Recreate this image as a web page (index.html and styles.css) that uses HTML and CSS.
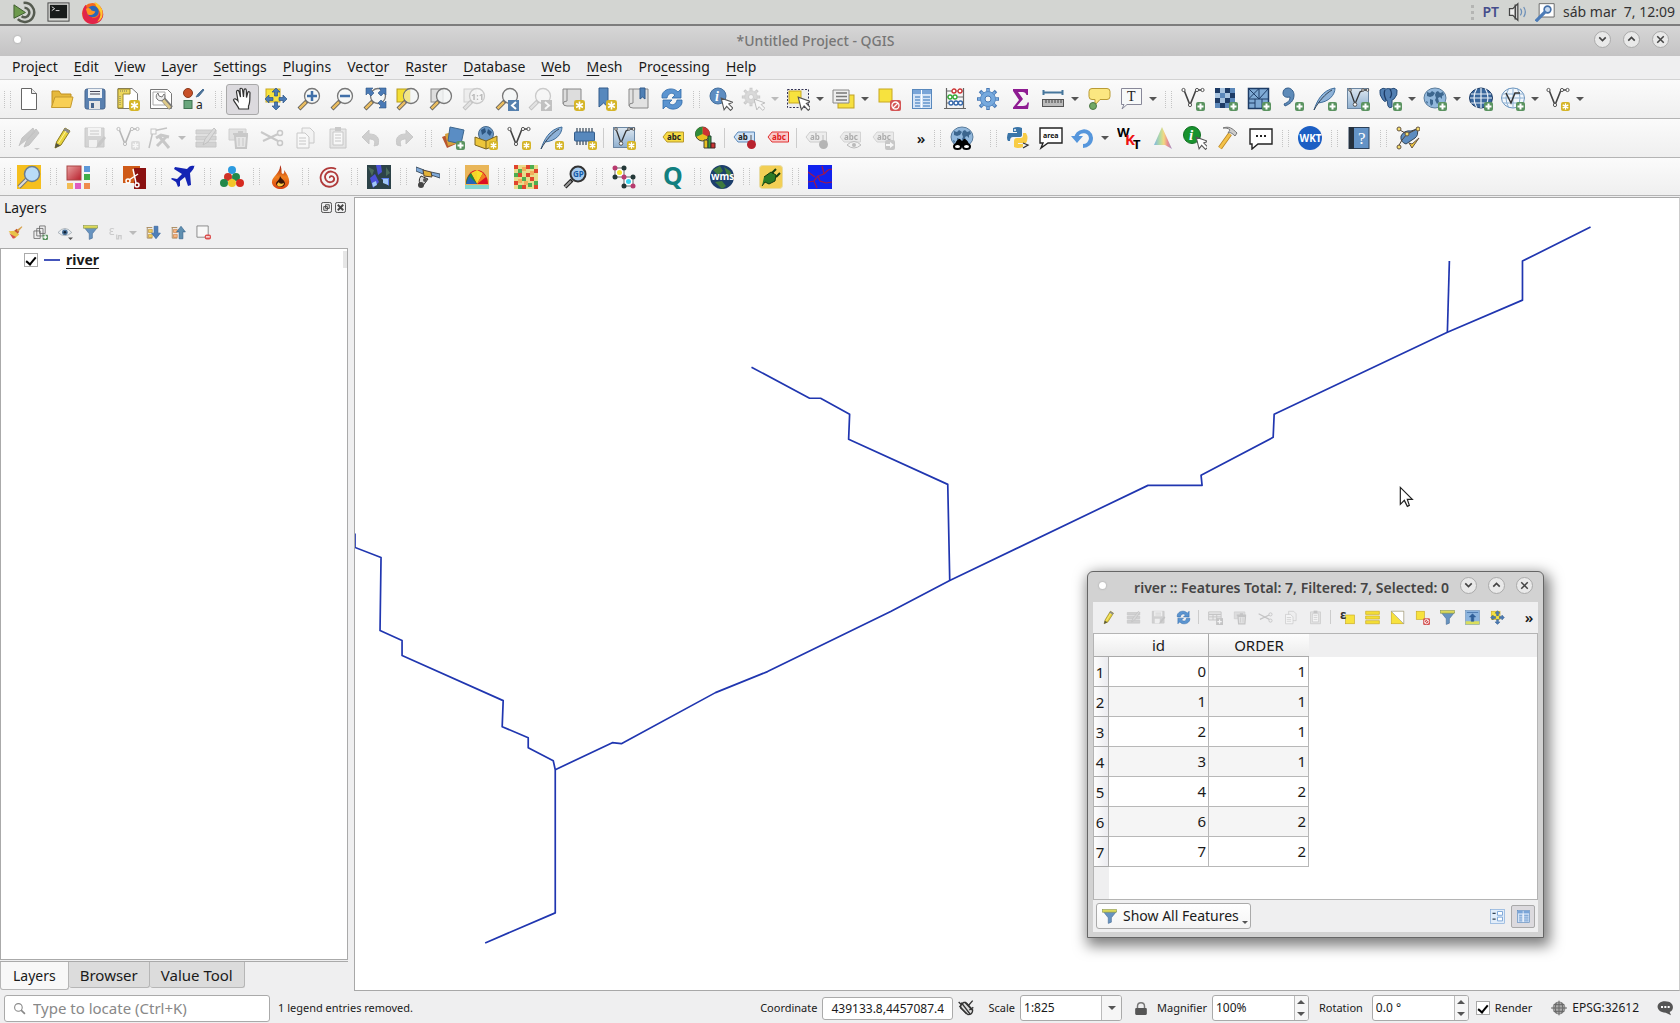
FILE: index.html
```html
<!DOCTYPE html>
<html lang="en">
<head>
<meta charset="utf-8">
<title>Untitled Project - QGIS</title>
<link rel="stylesheet" href="styles.css">
</head>
<body>
<svg class="sprite" aria-hidden="true">
<defs>
<linearGradient id="g-steel" x1="0" y1="0" x2="0" y2="1"><stop offset="0" stop-color="#dde7f0"/><stop offset="1" stop-color="#8fb0d0"/></linearGradient>
<linearGradient id="g-red" x1="0" y1="0" x2="1" y2="1"><stop offset="0" stop-color="#e9a0a0"/><stop offset="1" stop-color="#b8202c"/></linearGradient>
<linearGradient id="g-fire" x1="0" y1="0" x2="0" y2="1"><stop offset="0" stop-color="#a01810"/><stop offset=".5" stop-color="#f08020"/><stop offset="1" stop-color="#d84010"/></linearGradient>
<linearGradient id="g-rain" x1="0" y1="0" x2="1" y2="0"><stop offset="0" stop-color="#7fb8e0"/><stop offset=".35" stop-color="#b8dca0"/><stop offset=".55" stop-color="#f4d880"/><stop offset=".75" stop-color="#e89090"/><stop offset="1" stop-color="#a090c8"/></linearGradient>
<symbol id="plus" viewBox="0 0 9 9"><rect width="9" height="9" rx="2" fill="#5a9360"/><path d="M4.5 1.5v6M1.500 4.500h6" stroke="#fff" stroke-width="2"/></symbol>
<symbol id="star" viewBox="0 0 9 9"><rect width="9" height="9" rx="2" fill="#d5b528"/><path d="M4.500 1.300v6.400M1.700 2.900l5.600 3.200M1.700 6.100l5.600-3.200" stroke="#fff" stroke-width="1.300"/></symbol>
<symbol id="lens" viewBox="0 0 24 24"><path d="M10 14l-8 8" stroke="#555" stroke-width="4"/><path d="M9 15l-6.500 6.500" stroke="#e9bd62" stroke-width="2.500"/><circle cx="15" cy="9" r="7.500" fill="#f4f6f6" fill-opacity=".8" stroke="#777" stroke-width="1.300"/></symbol>
<symbol id="vee" viewBox="0 0 24 24"><path d="M3 3l6 15L15 3h7" fill="none" stroke="#444" stroke-width="1.600"/><g fill="#fff" stroke="#555"><circle cx="2.500" cy="3" r="1.600"/><circle cx="9" cy="18" r="1.600"/><circle cx="16" cy="3" r="1.600"/><circle cx="21.500" cy="3" r="1.600"/></g></symbol>
<symbol id="arrow" viewBox="0 0 12 12"><path d="M1 1l2.500 10 2.200-3 3.300 3.500 2-2L7.500 6 11 4.500z" fill="#fff" stroke="#555" stroke-width=".9"/></symbol>
<symbol id="pencil" viewBox="0 0 24 24"><path d="M5 22l1.500-6L15 2l5 3-9 14z" fill="#e8d33c" stroke="#8a7a20"/><path d="M5 22l1-5 4.500 2.500z" fill="#554"/><path d="M15 2l5 3-1.500 2.500-5-3z" fill="#8a8a8a"/><path d="M8.500 17L16 5" stroke="#fff6a0"/></symbol>
<symbol id="move" viewBox="0 0 24 24"><path d="M12 1l4 4h-2.500v4h-3V5H8zM12 23l4-4h-2.500v-4h-3v4H8zM1 12l4-4v2.500h4v3H5V16zM23 12l-4-4v2.500h-4v3h4V16z" fill="#4a7ab5" stroke="#2c5484" stroke-width=".7"/></symbol>
<symbol id="new" viewBox="0 0 24 24"><path d="M4.500 1.500h10l5 5v16h-15z" fill="#fff" stroke="#666"/><path d="M14.500 1.500v5h5" fill="#eee" stroke="#666"/></symbol>
<symbol id="open" viewBox="0 0 24 24"><path d="M2 20V4h7l2 3h10v4" fill="#e6b93c" stroke="#c09020"/><path d="M1.500 20.500L5 10h18l-2.500 10.500z" fill="#f8cf55" stroke="#c59a2e"/></symbol>
<symbol id="save" viewBox="0 0 24 24"><rect x="2" y="2" width="20" height="20" rx="2" fill="#5980b0" stroke="#46648c"/><rect x="5" y="2" width="14" height="9" fill="#eef2f6"/><path d="M7 4.500h10M7 7h10" stroke="#445"/><rect x="6" y="14" width="11" height="8" fill="#e6e6e6"/><rect x="8" y="16" width="3" height="5" fill="#46648c"/></symbol>
<symbol id="layout" viewBox="0 0 24 24"><path d="M2 1.500h14l5.500 5v15H2z" fill="#fff" stroke="#777"/><path d="M2 2h12v5H7v14H2z" fill="#ecd75d" stroke="#9c882a"/><path d="M4 4h8M4 9v9" stroke="#776" stroke-dasharray="1 1"/><use href="#star" x="13" y="13" width="11" height="11"/></symbol>
<symbol id="manager" viewBox="0 0 24 24"><path d="M1.500 2.500h17l4 4v15h-21z" fill="#fff" stroke="#777"/><path d="M4 5h12v13H4z" fill="none" stroke="#aaa"/><path d="M13 11l9 10" stroke="#777" stroke-width="5"/><path d="M14 13l7 8" stroke="#ddc98a" stroke-width="3"/><path d="M9 6a4 4 0 0 0 5 7 4 4 0 0 0 1-6l-2 3-3-1z" fill="#eee" stroke="#777"/></symbol>
<symbol id="style" viewBox="0 0 24 24"><circle cx="6" cy="6" r="4.500" fill="#c85028" stroke="#8a3a1c"/><path d="M14 10l2-3 5-5 1 1-5 6z" fill="#4c7298" stroke="#4c7298"/><rect x="2" y="13.500" width="8" height="8" fill="#69a67c" stroke="#3f7350"/><text x="14" y="22" font-size="12" fill="#222">a</text></symbol>
<symbol id="hand" viewBox="0 0 24 24"><path d="M8 22c-1-3-4-6-5.500-9 .5-2 2.500-1.500 4.500 1L5.500 5c0-2 2-2 2.500-.5L9.500 10 9 2.500C9 .8 11.300.8 11.500 2.500L12.500 10l.5-7c.3-1.600 2.200-1.400 2.300.2L15.500 10.500l1.300-5c.6-1.400 2.400-.8 2.200.7C18.600 10 19.500 15 17.500 19v3z" fill="#fff" stroke="#333" stroke-width="1.200"/></symbol>
<symbol id="pansel" viewBox="0 0 24 24"><rect x="2" y="2" width="14" height="13" fill="#f7e23e" stroke="#c8a820"/><use href="#move"/></symbol>
<symbol id="zin" viewBox="0 0 24 24"><use href="#lens"/><path d="M15 4v10M10 9h10" stroke="#3f6fa8" stroke-width="2.500"/></symbol>
<symbol id="zout" viewBox="0 0 24 24"><use href="#lens"/><path d="M10 9h10" stroke="#3f6fa8" stroke-width="2.500"/></symbol>
<symbol id="zfull" viewBox="0 0 24 24"><use href="#lens"/><path d="M3 1h7L8 3l3 3-3 3-3-3-2 2zM23 1v7l-2-2-3 3-3-3 3-3-2-2zM23 21h-7l2-2-3-3 3-3 3 3 2-2z" fill="#4a7ab5" stroke="#2c5484" stroke-width=".6"/></symbol>
<symbol id="zsel" viewBox="0 0 24 24"><rect x="1" y="2" width="13" height="13" fill="#f3df35" stroke="#b89c1c"/><use href="#lens"/><path d="M14 3a6 6 0 0 0 0 12z" fill="#f1e688"/></symbol>
<symbol id="zlay" viewBox="0 0 24 24"><rect x="2" y="2" width="12" height="13" fill="#ddd" stroke="#888"/><use href="#lens"/></symbol>
<symbol id="znat" viewBox="0 0 24 24"><use href="#zlay"/><text x="9" y="13" font-size="9" font-weight="700" fill="#444">1:1</text></symbol>
<symbol id="zlast" viewBox="0 0 24 24"><use href="#lens"/><rect x="13" y="13" width="11" height="11" fill="#5580ae"/><path d="M21 15l-4 3.500 4 3.500" fill="none" stroke="#fff" stroke-width="2"/></symbol>
<symbol id="znext" viewBox="0 0 24 24"><use href="#lens"/><rect x="13" y="13" width="11" height="11" fill="#666"/><path d="M17 15l4 3.500-4 3.500" fill="none" stroke="#fff" stroke-width="2"/></symbol>
<symbol id="newmap" viewBox="0 0 24 24"><path d="M2 2h18v17H6q-4 0-4-3z" fill="#ddd" stroke="#888"/><path d="M6 2v12q-4 0-4 3" fill="none" stroke="#888"/><use href="#star" x="13" y="13" width="11" height="11"/></symbol>
<symbol id="newbm" viewBox="0 0 24 24"><path d="M5 1h9v19l-4.500-4L5 20z" fill="#5788bd" stroke="#345d8c"/><use href="#star" x="12" y="13" width="11" height="11"/></symbol>
<symbol id="bm" viewBox="0 0 24 24"><path d="M2 2h19v19H6q-4 0-4-3z" fill="#e2e2e2" stroke="#888"/><path d="M6 2v14q-4 0-4 3" fill="none" stroke="#888"/><path d="M13 1h5v11l-2.500-2-2.500 2z" fill="#4f80b5" stroke="#345d8c"/></symbol>
<symbol id="refresh" viewBox="0 0 24 24"><path d="M2 11V8c2-7 12-8 16-3l3-3v9h-9l3-3c-3-3-7-2-8 3zM22 13v3c-2 7-12 8-16 3l-3 3v-9h9l-3 3c3 3 7 2 8-3z" fill="#5b94d0" stroke="#2f69a8" stroke-width=".8"/></symbol>
<symbol id="ident" viewBox="0 0 24 24"><circle cx="9" cy="9" r="8" fill="#5d8cc0" stroke="#44709f"/><text x="6" y="14" font-size="14" font-weight="700" font-style="italic" fill="#fff" font-family="Liberation Serif">i</text><use href="#arrow" x="11" y="10" width="14" height="14"/></symbol>
<symbol id="gear" viewBox="0 0 24 24"><path d="M12 1v22M1 12h22M4 4l16 16M20 4L4 20" stroke="#4a7ab5" stroke-width="3.500"/><path d="M12 2v20M2 12h20M5 5l14 14M19 5L5 19" stroke="#76a9de" stroke-width="2"/><circle cx="12" cy="12" r="7.500" fill="#76a9de" stroke="#5a8cc4"/><circle cx="12" cy="12" r="3" fill="#f5f5f5" stroke="#4a7ab5"/></symbol>
<symbol id="action" viewBox="0 0 24 24"><use href="#gear" width="20" height="20"/><use href="#arrow" x="12" y="11" width="13" height="13"/></symbol>
<symbol id="select" viewBox="0 0 24 24"><rect x="1.500" y="2.500" width="21" height="18" fill="#eee" stroke="#335" stroke-dasharray="2 1.500"/><rect x="3" y="4" width="12" height="12" fill="#f7e23e" stroke="#c8a820"/><use href="#arrow" x="11" y="9" width="15" height="15"/></symbol>
<symbol id="selval" viewBox="0 0 24 24"><rect x="7" y="8" width="16" height="13" fill="#f6e040" stroke="#bfa126"/><path d="M2 3h16v13H2z" fill="#eee" stroke="#888"/><path d="M5 6h11M5 9.500h11M5 13h11" stroke="#777" stroke-width="1.500"/></symbol>
<symbol id="desel" viewBox="0 0 24 24"><rect x="2" y="2" width="13" height="13" fill="#f7e23e" stroke="#c8a820"/><rect x="13" y="13" width="11" height="11" rx="2" fill="#d45555"/><circle cx="18.500" cy="18.500" r="3.500" fill="none" stroke="#fff" stroke-width="1.300"/><path d="M16 21l5-5" stroke="#fff" stroke-width="1.300"/></symbol>
<symbol id="table" viewBox="0 0 24 24"><rect x="2.500" y="2.500" width="19" height="19" fill="#d5e4f7" stroke="#5888bd"/><path d="M3 3h18v4H3z" fill="#7aa5d8"/><path d="M5 10h5M5 13h5M5 16h5M5 19h5M13 10h7M13 13h7M13 16h7M13 19h7" stroke="#6695cc" stroke-width="1.500"/><path d="M11.500 3v18" stroke="#fff"/></symbol>
<symbol id="abacus" viewBox="0 0 24 24"><path d="M3.500 1v20M20.500 1v20M1 21.500h22M3 4h18M3 10h18M3 16h18" stroke="#666" fill="none" stroke-width="1.200"/><g fill="#fff" stroke-width="1.300"><g stroke="#c33"><circle cx="11" cy="4" r="2"/><circle cx="17" cy="4" r="2"/></g><g stroke="#3a3"><circle cx="7" cy="10" r="2"/><circle cx="12" cy="10" r="2"/></g><g stroke="#36a"><circle cx="8" cy="16" r="2"/><circle cx="13" cy="16" r="2"/><circle cx="17.500" cy="16" r="2"/></g></g></symbol>
<symbol id="sum" viewBox="0 0 24 24"><path d="M4 2h15v6h-1.500q-1-3-4-3H9l5 7-6 7h6q4 0 4.500-3.500H20L19 22H4v-1.500L10 13 4 4z" fill="#8e1c92"/></symbol>
<symbol id="measure" viewBox="0 0 24 24"><path d="M2 5.500h20M2.500 3v5M21.500 3v5" stroke="#46769c" stroke-width="2"/><rect x="1.500" y="12.500" width="21" height="7" fill="#bbb" stroke="#555"/><path d="M5 13v3M8 13v3M11 13v3M14 13v3M17 13v3M20 13v3" stroke="#444"/></symbol>
<symbol id="tip" viewBox="0 0 24 24"><path d="M5 1.500h15q3 0 3 3v5q0 3-3 3h-7L8 18V12.500H5q-3 0-3-3v-5q0-3 3-3z" fill="#fbe781" stroke="#b99b35"/><circle cx="6" cy="19" r="3.500" fill="#71a865" stroke="#4c7745"/></symbol>
<symbol id="anno" viewBox="0 0 24 24"><path d="M2.500 1.500h20v16H8L3 22l2-4.500H2.500z" fill="#f7f9f9" stroke="#889"/><text x="8" y="14" font-size="14" font-family="Liberation Serif" fill="#222">T</text></symbol>
<symbol id="addv" viewBox="0 0 24 24"><use href="#vee"/><use href="#plus" x="15" y="15" width="9" height="9"/></symbol>
<symbol id="newv" viewBox="0 0 24 24"><use href="#vee"/><use href="#star" x="15" y="15" width="9" height="9"/></symbol>
<symbol id="addr" viewBox="0 0 24 24"><rect x="1" y="1" width="20" height="20" fill="#5c88ba"/><path d="M6 1h5v5H6zM11 6h5v5h-5zM1 6h5v5H1zM6 11h5v5H6z" fill="#a8c4e0"/><path d="M1 1h5v5H1zM11 1h5v5h-5zM16 6h5v5h-5zM1 11h5v5H1zM11 11h5v5h-5zM6 16h5v5H6z" fill="#1e3c66"/><use href="#plus" x="15" y="15" width="9" height="9"/></symbol>
<symbol id="addmesh" viewBox="0 0 24 24"><rect x="1.500" y="1.500" width="20" height="20" fill="#7ea9d4" stroke="#1e3c66" stroke-width="1.500"/><path d="M1.500 12h20M12 1.500v10M8 12v10M1.500 1.500L12 12M12 1.500L1.500 12M21.500 1.500L12 12M1.500 16h6.500M15 12v10" fill="none" stroke="#1e3c66"/><use href="#plus" x="15" y="15" width="9" height="9"/></symbol>
<symbol id="comma" viewBox="0 0 24 24"><path d="M4 17c5-2 6-4 6-7-5 1-7-1-7-4 0-3 2-5 5-5s6 3 6 7c0 6-4 9-9 11z" fill="#5d8ab8" stroke="#365f8c"/><use href="#plus" x="15" y="15" width="9" height="9"/></symbol>
<symbol id="quill" viewBox="0 0 24 24"><path d="M1 23C4 14 9 3 22 1c0 7-6 14-17 15" fill="#8eb2d8" stroke="#3f6d9b"/><path d="M1 23C6 14 12 7 19 3" fill="none" stroke="#345"/></symbol>
<symbol id="addquill" viewBox="0 0 24 24"><use href="#quill"/><use href="#plus" x="15" y="15" width="9" height="9"/></symbol>
<symbol id="newquill" viewBox="0 0 24 24"><use href="#quill"/><use href="#star" x="15" y="15" width="9" height="9"/></symbol>
<symbol id="vbox" viewBox="0 0 24 24"><rect x="1.500" y="1.500" width="21" height="20" fill="url(#g-steel)" stroke="#6b86a2"/><path d="M4 3l5 14 5-12 4-2h4" fill="none" stroke="#333" stroke-width="1.300"/><g fill="#fff" stroke="#555"><circle cx="4" cy="3" r="1.300"/><circle cx="9" cy="17.500" r="1.800"/><circle cx="17" cy="3" r="1.300"/><circle cx="21.500" cy="3" r="1.300"/></g></symbol>
<symbol id="addvbox" viewBox="0 0 24 24"><use href="#vbox"/><use href="#plus" x="15" y="15" width="9" height="9"/></symbol>
<symbol id="newvbox" viewBox="0 0 24 24"><use href="#vbox"/><use href="#star" x="15" y="15" width="9" height="9"/></symbol>
<symbol id="pg" viewBox="0 0 24 24"><path d="M2 3q3-3 6-1 2-1 5 0 3-2 6 1 1 5-3 9l-2 1v7q-3 2-4-1l-1-6q-2 3-4 0-4-5-3-10z" fill="#527fb2" stroke="#294d78"/><path d="M7 3c-2 4 0 7 1 10M12 2q3 5 0 9" fill="none" stroke="#1e3c66" stroke-width="1.300"/><use href="#plus" x="15" y="15" width="9" height="9"/></symbol>
<symbol id="earth" viewBox="0 0 24 24"><ellipse cx="12" cy="11" rx="11" ry="10" fill="#92b8dc" stroke="#5a7c9c"/><path d="M4 5l3 1 2-2 3 2-2 3-3 1-3-1zM7 12l3 1v4l-2 2-1-3zM13 5l2-1 2 2 3-1 1 3-2 1v3l-2-2-2 1 1 4-2 2-2-4 1-2-1-3zM3 14l2 1-1 2z" fill="#3c668e"/></symbol>
<symbol id="addearth" viewBox="0 0 24 24"><use href="#earth"/><use href="#plus" x="15" y="15" width="9" height="9"/></symbol>
<symbol id="wcs" viewBox="0 0 24 24"><ellipse cx="12" cy="11" rx="11.500" ry="10" fill="#38669c" stroke="#1e3c66"/><path d="M2 7h20M1 11h22M2 16h20M12 1v20M8 1q-6 10 0 20M16 1q6 10 0 20" fill="none" stroke="#e6eef6" stroke-width="1.200"/><use href="#plus" x="15" y="15" width="9" height="9"/></symbol>
<symbol id="wfs" viewBox="0 0 24 24"><ellipse cx="12" cy="11" rx="11.500" ry="10" fill="#f2f7fc" stroke="#6b94bd"/><path d="M2 7h20M1 11h22M2 16h20M12 1v20M8 1q-6 10 0 20M16 1q6 10 0 20" fill="none" stroke="#8db0d2"/><path d="M5 6l5 10 4-10h5" fill="none" stroke="#333" stroke-width="1.500"/><use href="#plus" x="15" y="15" width="9" height="9"/></symbol>
<symbol id="edits" viewBox="0 0 24 24"><path d="M2 20l3-8L16 2l2 4-8 8M7 21l3-7 9-11 3 4-10 12z" fill="#777" stroke="#666"/><path d="M17 22h6l-3 2z" fill="#777"/></symbol>
<symbol id="saveedit" viewBox="0 0 24 24"><path d="M2 2h19v19H2z" fill="#999" stroke="#777"/><path d="M5 2h13v8H5zM6 14h8v7H6z" fill="#eee"/><path d="M7 5h9M7 8h9" stroke="#777"/><path d="M13 22l2-5 6-7 2 2-6 8z" fill="#777"/></symbol>
<symbol id="vertex" viewBox="0 0 24 24"><path d="M1 22L5 5l14-3" fill="none" stroke="#666" stroke-width="1.500"/><rect x="3" y="3" width="5" height="5" fill="#fff" stroke="#666"/><path d="M9 20L19 10M11 10l10 12M8 12l5-3 8 2" stroke="#777" stroke-width="3" fill="none"/></symbol>
<symbol id="multi" viewBox="0 0 24 24"><path d="M2 4h20v4H2zM2 10h20v4H2zM2 16h20v5H2z" fill="#999" stroke="#777"/><path d="M9 19l2-6 9-11 2 2-8 12z" fill="#aaa" stroke="#666"/></symbol>
<symbol id="trash" viewBox="0 0 24 24"><path d="M2 3h17v11H2z" fill="#bbb" stroke="#888"/><path d="M6 8h15M11 6h5M8 10h12l-1 12H9z" fill="#ccc" stroke="#777" stroke-width="2"/><path d="M12 12v8M16 12v8" stroke="#777"/></symbol>
<symbol id="cut" viewBox="0 0 24 24"><path d="M1 6l17 9M3 15L18 8" stroke="#777" stroke-width="2"/><circle cx="20" cy="7" r="2.500" fill="none" stroke="#777" stroke-width="1.500"/><circle cx="20" cy="17" r="2.500" fill="none" stroke="#777" stroke-width="1.500"/></symbol>
<symbol id="copy" viewBox="0 0 24 24"><path d="M9 2h8l4 4v11H9z" fill="#eee" stroke="#777"/><path d="M4 7h8l4 4v11H4z" fill="#fff" stroke="#777"/><path d="M6 12h7M6 15h7M6 18h7" stroke="#777"/></symbol>
<symbol id="paste" viewBox="0 0 24 24"><path d="M4 3h16v19H4z" fill="#ccc" stroke="#777"/><path d="M7 6h10v13H7z" fill="#fff" stroke="#777"/><path d="M9 1h6v4H9z" fill="#777"/><path d="M9 9h6M9 12h6M9 15h6" stroke="#777"/></symbol>
<symbol id="undo" viewBox="0 0 24 24"><path d="M3 11l7-7v4c8 0 11 4 9 11l-4 1c2-5 0-7-5-7v5z" fill="#888" stroke="#777"/></symbol>
<symbol id="redo" viewBox="0 0 24 24"><path d="M21 11l-7-7v4c-8 0-11 4-9 11l4 1c-2-5 0-7 5-7v5z" fill="#888" stroke="#777"/></symbol>
<symbol id="dsm" viewBox="0 0 24 24"><path d="M1 11l10-4 4 11-9 4z" fill="#b8552f"/><path d="M4 8l10-3 3 12-10 3z" fill="#d6a23c"/><path d="M9 1l14 3-3 14-13-3z" fill="#5a8dc4" stroke="#3c668e"/><use href="#plus" x="15" y="15" width="9" height="9"/></symbol>
<symbol id="gpkg" viewBox="0 0 24 24"><circle cx="12" cy="8" r="7.500" fill="#6b98c6" stroke="#46698c"/><path d="M7 4l4-2 1 4-4 3zM14 3l4 3-2 4-3-3z" fill="#2d5580"/><path d="M1 11l11 4 11-5v9l-11 4-11-4z" fill="#edc63a" stroke="#7a6420"/><path d="M12 15v8" stroke="#7a6420"/><use href="#star" x="15" y="15" width="9" height="9"/></symbol>
<symbol id="chip" viewBox="0 0 24 24"><path d="M4 2v17M7 2v17M10 2v17M13 2v17M16 2v17M19 2v17" stroke="#345" stroke-width="1.200"/><rect x="1.500" y="6" width="20" height="9" rx="1" fill="#5788bd" stroke="#345d8c"/><use href="#star" x="15" y="15" width="9" height="9"/></symbol>
<symbol id="tag" viewBox="0 0 24 24"><path d="M2 11l4-5h16.500v10H6z" fill="#f7dc44" stroke="#b8982a"/><text x="6" y="14" font-size="8" font-weight="700" fill="#222">abc</text></symbol>
<symbol id="redtag" viewBox="0 0 24 24"><path d="M2 11l4-5h16.500v10H6z" fill="#f9c9c9" stroke="#e03030"/><text x="6" y="14" font-size="8" font-weight="700" fill="#e02020">abc</text></symbol>
<symbol id="pintag" viewBox="0 0 24 24"><path d="M1 11l4-5h16.500v10H5z" fill="#cfe2f6" stroke="#5b88b8"/><text x="5" y="14" font-size="8" font-weight="700" fill="#222">ab</text><path d="M18 9v8" stroke="#555"/><circle cx="18.500" cy="18.500" r="4.500" fill="#b8222e"/></symbol>
<symbol id="eyetag" viewBox="0 0 24 24"><use href="#tag"/><path d="M9 19q7-7 14 0q-7 6-14 0z" fill="#eee" stroke="#555"/><circle cx="16" cy="19" r="2" fill="#555"/></symbol>
<symbol id="movtag" viewBox="0 0 24 24"><use href="#tag"/><rect x="14" y="14" width="10" height="10" rx="2" fill="#777"/><path d="M15 18h4v-2l4 3-4 3v-2h-4z" fill="#fff"/></symbol>
<symbol id="diagram" viewBox="0 0 24 24"><circle cx="8.500" cy="8" r="7" fill="#e8c020" stroke="#443"/><path d="M8.500 8V1A7 7 0 0 1 15 11z" fill="#c33"/><path d="M8.500 8L2 11A7 7 0 0 1 8.500 1z" fill="#2e8b3a"/><path d="M10 14h4v8h-4z" fill="#e8c020" stroke="#443"/><path d="M14 10h3v12h-3z" fill="#3a9a3e" stroke="#243"/><path d="M17 17h4v5h-4z" fill="#c33" stroke="#422"/></symbol>
<symbol id="meta" viewBox="0 0 24 24"><use href="#earth"/><path d="M5 20q0-5 4-7h1l2 2 2-2h1q4 2 4 7z" fill="#000"/><ellipse cx="7.500" cy="20.500" rx="3.500" ry="2.500" fill="#fff" stroke="#000" stroke-width="2"/><ellipse cx="16.500" cy="20.500" rx="3.500" ry="2.500" fill="#fff" stroke="#000" stroke-width="2"/></symbol>
<symbol id="py" viewBox="0 0 24 24"><path d="M7 2q5-2 9 0v7q0 2-3 2H7q-3 0-3 4H2Q0 12 2 7h9V6H7z" fill="#3b75a8"/><path d="M17 7h3q3 5 0 10h-8v1h5v3q-5 2-9 0v-6q0-3 3-3h4q2 0 2-3z" fill="#f8cc45"/><circle cx="9" cy="4" r="1" fill="#fff"/><path d="M17 17l5 2-5 3" fill="none" stroke="#333" stroke-width="1.300"/></symbol>
<symbol id="area" viewBox="0 0 24 24"><path d="M1 2h22v15H9l-7 5 2-5H1z" fill="#fff" stroke="#222" stroke-width="1.400"/><text x="4" y="12" font-size="7" font-weight="700" fill="#111">area</text></symbol>
<symbol id="dots" viewBox="0 0 24 24"><path d="M1 3h22v15H9l-6 5v-5H1z" fill="#fff" stroke="#222" stroke-width="1.400"/><path d="M7 10h2M11 10h2M15 10h2" stroke="#222" stroke-width="2"/></symbol>
<symbol id="blueundo" viewBox="0 0 24 24"><path d="M5 13C5 4 19 2 20 12c0 5-4 8-8 8" fill="none" stroke="#5596dc" stroke-width="4"/><path d="M0 10h12l-6 7z" fill="#5596dc"/></symbol>
<symbol id="wkt3" viewBox="0 0 24 24"><g font-weight="700" font-size="13"><text x="0" y="11">W</text><text x="8" y="19" fill="#e11" font-size="15">K</text><text x="16" y="23">T</text></g></symbol>
<symbol id="prism" viewBox="0 0 24 24"><path d="M12 1l10 22-7-4L4 19z" fill="url(#g-rain)"/></symbol>
<symbol id="ginfo" viewBox="0 0 24 24"><circle cx="9" cy="9" r="8.500" fill="#18932e" stroke="#137024"/><text x="6" y="14" font-size="15" font-weight="700" font-style="italic" fill="#fff" font-family="Liberation Serif">i</text><use href="#arrow" x="12" y="10" width="14" height="14"/></symbol>
<symbol id="hammer" viewBox="0 0 24 24"><path d="M4 22L14 8" stroke="#b98420" stroke-width="4.500"/><path d="M4 22L14 8" stroke="#f3c24a" stroke-width="3"/><path d="M7 2c6-2 9 0 14 5l-2 3c-3-3-5-4-7-3l2-3c-2-2-4-2-7-2z" fill="#ccc" stroke="#777"/></symbol>
<symbol id="wktc" viewBox="0 0 24 24"><circle cx="12" cy="12" r="12" fill="#1c5fc4"/><text x="1.500" y="16" font-size="10" font-weight="700" fill="#fff">WKT</text></symbol>
<symbol id="help" viewBox="0 0 24 24"><rect x="2" y="1.500" width="20" height="21" fill="#6493c6" stroke="#2c4058"/><path d="M2 1h5v22H2z" fill="#26313e"/><text x="11" y="18" font-size="17" font-family="Liberation Serif" fill="#fff">?</text></symbol>
<symbol id="check" viewBox="0 0 24 24"><path d="M5 10q3-6 10-5l6-2q2 6-2 9l-9 6q-6-2-5-8z" fill="#5d8cc0" stroke="#345"/><path d="M2 3l9 5 10-5M11 8l-5 6-4 7" fill="none" stroke="#543"/><g fill="#f3dc6a" stroke="#654"><circle cx="3" cy="3" r="2"/><circle cx="22" cy="3" r="2"/><circle cx="11" cy="8" r="2"/><circle cx="3" cy="21" r="2"/></g><path d="M13 17l3 5 7-10-7 6z" fill="#f3c93c" stroke="#654"/></symbol>
<symbol id="ysearch" viewBox="0 0 24 24"><rect width="24" height="24" fill="#f5bf1e"/><path d="M10 14l-8 8" stroke="#777" stroke-width="4"/><path d="M10 14l-8 8" stroke="#ddd" stroke-width="2"/><circle cx="15" cy="9" r="7.500" fill="#b9dcf8" stroke="#6b7d90" stroke-width="1.500"/></symbol>
<symbol id="blocks" viewBox="0 0 24 24"><rect x="1" y="1" width="14" height="14" fill="url(#g-red)" stroke="#a44"/><rect x="18" y="1" width="6" height="6" fill="#5c98d8"/><rect x="18" y="9" width="6" height="6" fill="#3fae48"/><rect x="1" y="18" width="6" height="6" fill="#f2bd54"/><rect x="9" y="18" width="6" height="6" fill="#df5bc0"/><rect x="18" y="18" width="6" height="6" fill="#ef8a4d"/></symbol>
<symbol id="clip" viewBox="0 0 24 24"><rect x="1" y="1" width="17" height="17" fill="#cf5a18"/><rect x="12" y="3" width="12" height="21" fill="#8a1010"/><path d="M11 4l3 14M7 15l9-6" stroke="#fff" stroke-width="1.500"/><g fill="none" stroke="#fff" stroke-width="1.500"><circle cx="15" cy="20" r="2"/><circle cx="6" cy="16" r="2"/></g></symbol>
<symbol id="plane" viewBox="0 0 24 24"><path d="M23 1c-2-1-5 0-7 3L4 2 3 4l8 5-5 5-5-1-1 1 5 3 2 5 2-1v-5l5-4 3 9 3-1-1-12c3-3 5-6 4-8z" fill="#1424b4"/></symbol>
<symbol id="balls" viewBox="0 0 24 24"><circle cx="12" cy="5" r="4" fill="#2d9be0"/><circle cx="8" cy="12" r="4" fill="#cf3327"/><circle cx="16" cy="12" r="4" fill="#22884a"/><circle cx="4" cy="18" r="4" fill="#22884a"/><circle cx="12" cy="18" r="4" fill="#f2c52a"/><circle cx="20" cy="18" r="4" fill="#d62a20"/></symbol>
<symbol id="flame" viewBox="0 0 24 24"><path d="M11 0c3 5 0 8 3 9 2-1 1-3 1-4 3 4 6 9 5 13-2 8-15 8-17 0-1-6 9-10 8-18z" fill="url(#g-fire)"/><path d="M11 11c2 4 5 4 5 8-1 4-8 4-9 0 0-3 4-4 4-8z" fill="#3a1608"/><path d="M10 17c0 2 3 2 5 1 0 4-7 5-7 1z" fill="#ffc840"/></symbol>
<symbol id="spiral" viewBox="0 0 24 24"><path d="M12 13c-1-2 3-3 4 0 1 4-5 6-8 2-3-5 2-10 7-8 6 2 7 11 0 14C7 24 1 17 3 10 5 4 12 1 18 4" fill="none" stroke="#b03a3a" stroke-width="1.800"/></symbol>
<symbol id="sat1" viewBox="0 0 24 24"><rect width="24" height="24" fill="#2c4248"/><path d="M9 0h5l1 7-4 3zM3 13l5-4 4 8-6 6z" fill="#4a50d8"/><path d="M14 13h8v8z" fill="#6080f0"/><path d="M16 14h5v6l-5-2zM5 18l4-2 1 4-4 2z" fill="#a0c8f8"/><path d="M1 2l6 3-2 6zM19 2l4 6-4 3z" fill="#4b6b5c"/></symbol>
<symbol id="satellite" viewBox="0 0 24 24"><path d="M0 2l8 3-1 4-7-3zM15 7l9 2v4l-9-3z" fill="#7fa9d8" stroke="#456"/><path d="M7 5l8 2 1 5-8-1z" fill="#e3b238" stroke="#543"/><path d="M5 11q-4 5 1 11l6-8z" fill="#ddd" stroke="#333"/><circle cx="5" cy="20" r="3" fill="#444"/><circle cx="9" cy="15" r="2" fill="#555"/></symbol>
<symbol id="gauge" viewBox="0 0 24 24"><rect width="24" height="24" fill="#e9b659"/><path d="M0 20h24v4H0z" fill="#83d6d0"/><path d="M1 19a11 14 0 0 1 22 0z" fill="#d12"/><path d="M12 19V5l-6 3z" fill="#f4d42a"/><path d="M1 19a11 14 0 0 1 5-11l6 11z" fill="#1d8a3a"/><path d="M1 19l3-8 8 8z" fill="#2564b8"/><path d="M12 19V5l6 3z" fill="#f4e02a"/><path d="M12 19l6-11 3 4z" fill="#f08020"/></symbol>
<symbol id="grid" viewBox="0 0 24 24"><rect width="24" height="24" fill="#e8dc8a"/><path d="M0 0h4v4H0zM12 0h4v4h-4zM4 8h4v4H4zM20 4h4v4h-4zM16 12h4v4h-4zM0 16h4v4H0zM8 20h4v4H8zM20 20h4v4h-4zM12 8h4v4h-4z" fill="#e0442c"/><path d="M4 4h4v4H4zM8 12h4v4H8zM16 0h4v4h-4zM0 8h4v4H0zM20 16h4v4h-4zM4 20h4v4H4zM14 18h4v4h-4z" fill="#4fae50"/><path d="M8 2h4v4H8zM16 6h4v4h-4zM4 14h4v4H4zM10 16h4v4h-4z" fill="#f3ad5c"/></symbol>
<symbol id="gp" viewBox="0 0 24 24"><path d="M9 15l-7 7" stroke="#222" stroke-width="4"/><path d="M8 16l-6 6" stroke="#999" stroke-width="2"/><circle cx="15" cy="9" r="7.500" fill="#a8ccee" stroke="#333" stroke-width="2"/><text x="10" y="12" font-size="8" font-weight="700" fill="#145aa8">GP</text></symbol>
<symbol id="nodes" viewBox="0 0 24 24"><path d="M3 3h9v9H3zM12 12h9v9h-9z" fill="#fff" stroke="#666"/><g fill="#b83a6e"><circle cx="3" cy="3" r="2.500"/><circle cx="12" cy="12" r="2.500"/><circle cx="21" cy="21" r="2.500"/></g><g fill="#243838"><circle cx="12" cy="3" r="2.500"/><circle cx="3" cy="12" r="2.500"/><circle cx="21" cy="12" r="2.500"/><circle cx="12" cy="21" r="2.500"/></g><circle cx="7.500" cy="7.500" r="2.500" fill="#f6e52a"/><circle cx="16.500" cy="16.500" r="2.500" fill="#35d2ee"/></symbol>
<symbol id="q" viewBox="0 0 24 24"><text x="2" y="20" font-size="25" font-weight="700" fill="#128080">Q</text></symbol>
<symbol id="wms" viewBox="0 0 24 24"><circle cx="12" cy="12" r="12" fill="#1c3f6c"/><path d="M3 5l7-4 3 5-5 4zM14 2l6 4 3 6-6-2zM5 17l7-1 4 5-4 3z" fill="#3e7a3e"/><text x="1" y="15" font-size="10" font-weight="700" fill="#fff">wms</text></symbol>
<symbol id="plug" viewBox="0 0 24 24"><rect x=".5" y=".5" width="23" height="23" rx="3" fill="#f2cf55" stroke="#e8dca8"/><path d="M5 12l7-5 5 3-1 6-6 3-4-2-3 4" fill="#2b7a26" stroke="#123c10"/><path d="M13 8l4-4M17 12l4-4" stroke="#123c10" stroke-width="2"/></symbol>
<symbol id="streams" viewBox="0 0 24 24"><rect width="24" height="24" fill="#1022ee"/><path d="M0 17l6-1 4-5 6-2 4-4 4-1M0 7l7 5M10 11l2 5 6 2 6-1M6 16l3 7M16 9l-2-8" fill="none" stroke="#a01848" stroke-width="1.200"/></symbol>
<symbol id="brush" viewBox="0 0 24 24"><path d="M1 10l9 12 8-7-7-6z" fill="#e8c24a"/><path d="M2 13l6 9 5-3-8-4z" fill="#d85050"/><path d="M10 9l4-3 4 4-2 4z" fill="#c05030"/><path d="M14 8l8-6 1 1-7 8z" fill="#d8a24c"/></symbol>
<symbol id="group" viewBox="0 0 24 24"><path d="M1.500 9.500h10v12h-10zM6 5.500h10v12H6zM10.500 1.500h9v12h-9z" fill="none" stroke="#666" stroke-width="1.300"/><use href="#plus" x="15" y="15" width="9" height="9"/></symbol>
<symbol id="eye" viewBox="0 0 24 24"><path d="M0 12Q11-1 22 12 11 22 0 12z" fill="#e8eef3" stroke="#8a949c"/><circle cx="11" cy="11.500" r="4.500" fill="#4a7098"/><circle cx="11" cy="11.500" r="2" fill="#123"/><path d="M16 20h8l-4 4z" fill="#555"/></symbol>
<symbol id="funnel" viewBox="0 0 24 24"><path d="M2 4l8 10v9l5-2v-7l8-10z" fill="#6793c0" stroke="#4b7098"/><rect x="1" y="1" width="22" height="4" fill="#dcd95a" stroke="#8d9a48"/></symbol>
<symbol id="eps" viewBox="0 0 24 24"><text x="1" y="16" font-size="20" fill="#888">ε</text><path d="M14 15v7h3v-5h4v6" fill="none" stroke="#888" stroke-width="2"/></symbol>
<symbol id="expand" viewBox="0 0 24 24"><path d="M1 4h9M2 4v17h8" fill="none" stroke="#aa8c60" stroke-width="1.500"/><path d="M4 7h6v5H4zM4 15h6v5H4z" fill="#f1cf60" stroke="#b88c2c"/><path d="M13 2h6v11h4l-7 9-7-9h4z" fill="#4f7fb8" stroke="#2f5f98"/></symbol>
<symbol id="collapse" viewBox="0 0 24 24"><path d="M1 4h9M2 4v17h8" fill="none" stroke="#aa8c60" stroke-width="1.500"/><path d="M4 7h6v5H4zM4 15h6v5H4z" fill="#f5b580" stroke="#c8783c"/><path d="M13 22h6V11h4l-7-9-7 9h4z" fill="#5f8fb0" stroke="#2f5f88"/></symbol>
<symbol id="remove" viewBox="0 0 24 24"><path d="M1.500 1.500h18v18h-18z" fill="#f8f8f8" stroke="#777" stroke-width="1.300"/><rect x="14" y="15" width="10" height="8" rx="3" fill="#dc4f4f"/><path d="M16 19h6" stroke="#fff" stroke-width="2"/></symbol>
<symbol id="addrow" viewBox="0 0 24 24"><path d="M1 3h20v4H1zM1 7h20v9H1zM8 7v9M14 7v9M1 11h20" fill="#ddd" stroke="#777" stroke-width="1.500"/><rect x="13" y="13" width="11" height="11" fill="#777"/><path d="M18.500 15v7M15 18.500h7" stroke="#fff" stroke-width="2"/></symbol>
<symbol id="selexp" viewBox="0 0 24 24"><rect x="9" y="8" width="14" height="14" fill="#f7e23e" stroke="#c8a820"/><text x="0" y="15" font-size="20" font-weight="700" fill="#333">ε</text></symbol>
<symbol id="selall" viewBox="0 0 24 24"><path d="M1 2h22v5H1zM1 9.500h22v5H1zM1 17h22v5H1z" fill="#f4de35" stroke="#c8a820"/></symbol>
<symbol id="invert" viewBox="0 0 24 24"><rect x="2" y="2" width="20" height="20" fill="#f7e23e" stroke="#c8a820"/><path d="M2 2h20v20z" fill="#fff" stroke="#999"/></symbol>
<symbol id="totop" viewBox="0 0 24 24"><rect x="1" y="1" width="22" height="22" fill="#8cb4de" stroke="#6b90b8"/><path d="M1 18h22v5H1z" fill="#d9dd5c"/><path d="M3 4h18M12 6l5 5h-3v7h-4v-7H7z" fill="#2f5f98" stroke="#2f5f98"/></symbol>
<symbol id="form" viewBox="0 0 24 24"><rect x="1" y="1" width="22" height="22" fill="#e2edf9" stroke="#7aa5d8"/><path d="M4 7h5M4 16h5" stroke="#345" stroke-width="2"/><path d="M12 4h8v6h-8zM12 13h8v6h-8z" fill="#fff" stroke="#7aa5d8" stroke-width="1.500"/></symbol>
<symbol id="arc" viewBox="0 0 24 24"><path d="M11 2a10 10 0 1 1-6 17M12 7a5 5 0 1 1-3 9" fill="none" stroke="#555b50" stroke-width="2.600"/><path d="M1 4l12 8-12 6z" fill="#6d9a4d" stroke="#3f5c30"/></symbol>
<symbol id="term" viewBox="0 0 24 24"><rect x="1" y="2" width="22" height="19" fill="#d8dad6" stroke="#444"/><rect x="3" y="4" width="18" height="14" fill="#181c1a"/><path d="M5 6l3 2-3 2M9 10h4" fill="none" stroke="#ddd"/></symbol>
<symbol id="fox" viewBox="0 0 24 24"><circle cx="12" cy="13" r="11" fill="#f56a1c"/><path d="M12 24C4 24 0 17 2 9q1-3 3-5 1 5 7 14 9 0 8-12 6 8 1 14-4 4-9 4z" fill="#e2244a"/><circle cx="12.500" cy="11" r="6" fill="#2a67b8"/><path d="M14 1q5 2 6 5 4 4 2 11-2 4-5 5 6-8 1-14-3-3-4-7z" fill="#ffc82c"/><path d="M5 8q5-2 6 2l4 1q-2 5-8 3z" fill="#ff9420"/></symbol>
<symbol id="sound" viewBox="0 0 24 24"><path d="M3 8h4l6-6v20l-6-6H3z" fill="#eee" stroke="#444" stroke-width="1.500"/><path d="M10 3v18" stroke="#444" stroke-width="2"/><path d="M16 8q3 4 0 8M20 6q4 6 0 12" fill="none" stroke="#6c8fb8" stroke-width="1.500"/></symbol>
<symbol id="net" viewBox="0 0 24 24"><path d="M5 2h18v16H5z" fill="#fff" stroke="#555"/><circle cx="15" cy="9" r="4" fill="#c8daf0" stroke="#4470a8" stroke-width="2"/><path d="M1 23L13 11" stroke="#4c7cb8" stroke-width="4"/></symbol>
<symbol id="search" viewBox="0 0 24 24"><circle cx="10" cy="10" r="7" fill="none" stroke="#888" stroke-width="2"/><path d="M15 15l7 7" stroke="#888" stroke-width="3"/></symbol>
<symbol id="bug" viewBox="0 0 24 24"><path d="M4 8q5-7 9-3l9 10q0 7-7 7L4 12z" fill="#ddd" stroke="#333" stroke-width="2"/><path d="M5 4l13 17M2 9l11 12M10 3l11 12M15 9l7-8M17 15l6-4M1 3l5 5" stroke="#333" stroke-width="2"/></symbol>
<symbol id="lock" viewBox="0 0 24 24"><path d="M6 12V8q0-6 6-6t6 6v4" fill="none" stroke="#777" stroke-width="2.500"/><rect x="2" y="11" width="20" height="12" rx="2" fill="#555"/></symbol>
<symbol id="globe" viewBox="0 0 24 24"><circle cx="12" cy="12" r="9" fill="#aaa" stroke="#666"/><path d="M0 12h24M12 1v22M4 7h16M4 17h16M8 4q-4 8 0 16M16 4q4 8 0 16" fill="none" stroke="#666" stroke-width="1.500"/></symbol>
<symbol id="chat" viewBox="0 0 24 24"><path d="M12 2c15 0 14 14 7 16l2 5-8-4C-3 19-3 2 12 2z" fill="#555"/><path d="M6 10.500h3M11 10.500h3M16 10.500h3" stroke="#fff" stroke-width="3"/></symbol>
<symbol id="down" viewBox="0 0 12 12"><path d="M3 4l3 3 3-3" fill="none" stroke="#444" stroke-width="1.500"/></symbol>
<symbol id="up" viewBox="0 0 12 12"><path d="M3 7l3-3 3 3" fill="none" stroke="#444" stroke-width="1.500"/></symbol>
<symbol id="close" viewBox="0 0 12 12"><path d="M3 3l6 6M9 3L3 9" stroke="#444" stroke-width="1.400"/></symbol>
</defs>
</svg>

<div class="desktop">
<header class="panel">
<button class="launch" aria-label="Menu"><svg><use href="#arc"/></svg></button>
<button class="launch" aria-label="Terminal"><svg><use href="#term"/></svg></button>
<button class="launch" aria-label="Firefox"><svg><use href="#fox"/></svg></button>
<div class="tray"><i class="tray-grip"></i><span class="kbd">PT</span><svg><use href="#sound"/></svg><svg><use href="#net"/></svg><time>sáb mar&nbsp; 7, 12:09</time></div>
</header>

<main class="app">
<div class="titlebar"><i class="dot"></i><h1>*Untitled Project - QGIS</h1>
<div class="winbtns"><button aria-label="Minimize"><svg><use href="#down"/></svg></button><button aria-label="Maximize"><svg><use href="#up"/></svg></button><button aria-label="Close"><svg><use href="#close"/></svg></button></div></div>
<nav class="menu"><a href="#">Pro<u>j</u>ect</a><a href="#"><u>E</u>dit</a><a href="#"><u>V</u>iew</a><a href="#"><u>L</u>ayer</a><a href="#"><u>S</u>ettings</a><a href="#"><u>P</u>lugins</a><a href="#">Vect<u>o</u>r</a><a href="#"><u>R</u>aster</a><a href="#"><u>D</u>atabase</a><a href="#"><u>W</u>eb</a><a href="#"><u>M</u>esh</a><a href="#">Pro<u>c</u>essing</a><a href="#"><u>H</u>elp</a></nav>

<div class="toolbar">
<i class="grip"></i>
<button aria-label="New"><svg><use href="#new"/></svg></button>
<button aria-label="Open"><svg><use href="#open"/></svg></button>
<button aria-label="Save"><svg><use href="#save"/></svg></button>
<button aria-label="New layout"><svg><use href="#layout"/></svg></button>
<button aria-label="Layout manager"><svg><use href="#manager"/></svg></button>
<button aria-label="Style manager"><svg><use href="#style"/></svg></button>
<i class="grip"></i>
<button class="on" aria-label="Pan map"><svg><use href="#hand"/></svg></button>
<button aria-label="Pan to selection"><svg><use href="#pansel"/></svg></button>
<button aria-label="Zoom in"><svg><use href="#zin"/></svg></button>
<button aria-label="Zoom out"><svg><use href="#zout"/></svg></button>
<button aria-label="Zoom full"><svg><use href="#zfull"/></svg></button>
<button aria-label="Zoom to selection"><svg><use href="#zsel"/></svg></button>
<button aria-label="Zoom to layer"><svg><use href="#zlay"/></svg></button>
<button disabled aria-label="Zoom native"><svg><use href="#znat"/></svg></button>
<button aria-label="Zoom last"><svg><use href="#zlast"/></svg></button>
<button disabled aria-label="Zoom next"><svg><use href="#znext"/></svg></button>
<button aria-label="New map view"><svg><use href="#newmap"/></svg></button>
<button aria-label="New bookmark"><svg><use href="#newbm"/></svg></button>
<button aria-label="Bookmarks"><svg><use href="#bm"/></svg></button>
<button aria-label="Refresh"><svg><use href="#refresh"/></svg></button>
<i class="grip"></i>
<button aria-label="Identify"><svg><use href="#ident"/></svg></button>
<button class="drop" disabled aria-label="Run action"><svg><use href="#action"/></svg></button>
<button class="drop" aria-label="Select"><svg><use href="#select"/></svg></button>
<button class="drop" aria-label="Select by value"><svg><use href="#selval"/></svg></button>
<button aria-label="Deselect"><svg><use href="#desel"/></svg></button>
<button aria-label="Attribute table"><svg><use href="#table"/></svg></button>
<button aria-label="Field calculator"><svg><use href="#abacus"/></svg></button>
<button aria-label="Toolbox"><svg><use href="#gear"/></svg></button>
<button aria-label="Statistics"><svg><use href="#sum"/></svg></button>
<button class="drop" aria-label="Measure"><svg><use href="#measure"/></svg></button>
<button aria-label="Map tips"><svg><use href="#tip"/></svg></button>
<button class="drop" aria-label="Annotation"><svg><use href="#anno"/></svg></button>
<i class="grip"></i>
<button aria-label="Add vector"><svg><use href="#addv"/></svg></button>
<button aria-label="Add raster"><svg><use href="#addr"/></svg></button>
<button aria-label="Add mesh"><svg><use href="#addmesh"/></svg></button>
<button aria-label="Add delimited text"><svg><use href="#comma"/></svg></button>
<button aria-label="Add SpatiaLite"><svg><use href="#addquill"/></svg></button>
<button aria-label="Add virtual layer"><svg><use href="#addvbox"/></svg></button>
<button class="drop" aria-label="Add PostGIS"><svg><use href="#pg"/></svg></button>
<button class="drop" aria-label="Add WMS"><svg><use href="#addearth"/></svg></button>
<button aria-label="Add WCS"><svg><use href="#wcs"/></svg></button>
<button class="drop" aria-label="Add WFS"><svg><use href="#wfs"/></svg></button>
<button class="drop" aria-label="New vector"><svg><use href="#newv"/></svg></button>
</div>

<div class="toolbar">
<i class="grip"></i>
<button disabled aria-label="Current edits"><svg><use href="#edits"/></svg></button>
<button aria-label="Toggle editing"><svg><use href="#pencil"/></svg></button>
<button disabled aria-label="Save edits"><svg><use href="#saveedit"/></svg></button>
<button disabled aria-label="Add feature"><svg><use href="#newv"/></svg></button>
<button class="drop" disabled aria-label="Vertex tool"><svg><use href="#vertex"/></svg></button>
<button disabled aria-label="Multi edit"><svg><use href="#multi"/></svg></button>
<button disabled aria-label="Delete"><svg><use href="#trash"/></svg></button>
<button disabled aria-label="Cut"><svg><use href="#cut"/></svg></button>
<button disabled aria-label="Copy"><svg><use href="#copy"/></svg></button>
<button disabled aria-label="Paste"><svg><use href="#paste"/></svg></button>
<button disabled aria-label="Undo"><svg><use href="#undo"/></svg></button>
<button disabled aria-label="Redo"><svg><use href="#redo"/></svg></button>
<i class="grip"></i>
<button aria-label="Data source manager"><svg><use href="#dsm"/></svg></button>
<button aria-label="New GeoPackage"><svg><use href="#gpkg"/></svg></button>
<button aria-label="New shapefile"><svg><use href="#newv"/></svg></button>
<button aria-label="New SpatiaLite"><svg><use href="#newquill"/></svg></button>
<button aria-label="New scratch layer"><svg><use href="#chip"/></svg></button>
<i class="sep"></i>
<button aria-label="New virtual layer"><svg><use href="#newvbox"/></svg></button>
<i class="grip"></i>
<button aria-label="Labels"><svg><use href="#tag"/></svg></button>
<button aria-label="Diagrams"><svg><use href="#diagram"/></svg></button>
<i class="sep"></i>
<button aria-label="Highlight pinned"><svg><use href="#pintag"/></svg></button>
<button aria-label="Unplaced labels"><svg><use href="#redtag"/></svg></button>
<i class="sep"></i>
<button disabled aria-label="Pin labels"><svg><use href="#pintag"/></svg></button>
<button disabled aria-label="Show labels"><svg><use href="#eyetag"/></svg></button>
<button disabled aria-label="Move label"><svg><use href="#movtag"/></svg></button>
<button class="more">»</button>
<i class="grip"></i>
<button aria-label="MetaSearch"><svg><use href="#meta"/></svg></button>
<i class="grip spaced"></i>
<button aria-label="Python console"><svg><use href="#py"/></svg></button>
<button aria-label="Area"><svg><use href="#area"/></svg></button>
<button class="drop" aria-label="Reload"><svg><use href="#blueundo"/></svg></button>
<button aria-label="Get WKT"><svg><use href="#wkt3"/></svg></button>
<button aria-label="Spectrum"><svg><use href="#prism"/></svg></button>
<button aria-label="Value info"><svg><use href="#ginfo"/></svg></button>
<button aria-label="Builder"><svg><use href="#hammer"/></svg></button>
<button aria-label="Comment"><svg><use href="#dots"/></svg></button>
<i class="grip"></i>
<button aria-label="QuickWKT"><svg><use href="#wktc"/></svg></button>
<i class="grip"></i>
<button aria-label="Help"><svg><use href="#help"/></svg></button>
<i class="grip"></i>
<button aria-label="Topology checker"><svg><use href="#check"/></svg></button>
</div>

<div class="toolbar plugins">
<i class="grip"></i><button aria-label="Search layers"><svg><use href="#ysearch"/></svg></button>
<i class="grip"></i><button aria-label="Blocks"><svg><use href="#blocks"/></svg></button>
<i class="grip spaced"></i><button aria-label="Clipper"><svg><use href="#clip"/></svg></button>
<i class="grip"></i><button aria-label="Flight"><svg><use href="#plane"/></svg></button>
<i class="grip"></i><button aria-label="Mixture"><svg><use href="#balls"/></svg></button>
<i class="grip"></i><button aria-label="Fire"><svg><use href="#flame"/></svg></button>
<i class="grip"></i><button aria-label="Spiral"><svg><use href="#spiral"/></svg></button>
<i class="grip"></i><button aria-label="Imagery"><svg><use href="#sat1"/></svg></button>
<i class="grip"></i><button aria-label="Satellite"><svg><use href="#satellite"/></svg></button>
<i class="grip"></i><button aria-label="Gauge"><svg><use href="#gauge"/></svg></button>
<i class="grip"></i><button aria-label="Classification"><svg><use href="#grid"/></svg></button>
<i class="grip"></i><button aria-label="Geoprocessing search"><svg><use href="#gp"/></svg></button>
<i class="grip"></i><button aria-label="Network"><svg><use href="#nodes"/></svg></button>
<i class="grip"></i><button aria-label="Quick"><svg><use href="#q"/></svg></button>
<i class="grip"></i><button aria-label="WMS"><svg><use href="#wms"/></svg></button>
<i class="grip"></i><button aria-label="Plugin reloader"><svg><use href="#plug"/></svg></button>
<i class="grip"></i><button aria-label="Streams"><svg><use href="#streams"/></svg></button>
</div>

<div class="work">
<aside class="dock">
<div class="dock-head"><h2>Layers</h2><button aria-label="Float"><svg viewBox="0 0 12 12"><rect x=".5" y=".5" width="11" height="11" rx="2" fill="none" stroke="#444"/><path d="M5 3h4v4H5zM3 5h4v4H3z" fill="#efefef" stroke="#444"/></svg></button><button aria-label="Close panel"><svg viewBox="0 0 12 12"><rect x=".5" y=".5" width="11" height="11" rx="2" fill="none" stroke="#444"/><path d="M3 3l6 6M9 3L3 9" stroke="#444" stroke-width="2"/></svg></button></div>
<div class="dock-tools">
<button aria-label="Layer styling"><svg><use href="#brush"/></svg></button>
<button aria-label="Add group"><svg><use href="#group"/></svg></button>
<button aria-label="Visibility"><svg><use href="#eye"/></svg></button>
<button aria-label="Filter legend"><svg><use href="#funnel"/></svg></button>
<button class="drop" disabled aria-label="Filter by expression"><svg><use href="#eps"/></svg></button>
<button aria-label="Expand all"><svg><use href="#expand"/></svg></button>
<button aria-label="Collapse all"><svg><use href="#collapse"/></svg></button>
<button aria-label="Remove layer"><svg><use href="#remove"/></svg></button>
</div>
<div class="tree"><label class="layer"><input type="checkbox" checked><i class="line"></i><b>river</b></label><i class="scroll"></i></div>
<div class="tabs"><button class="current">Layers</button><button>Browser</button><button>Value Tool</button></div>
</aside>
<section class="canvas">
<svg class="map" viewBox="355 198 1324 791" preserveAspectRatio="xMinYMin slice" role="img" aria-label="River layer">
<g fill="none" stroke="#2036b0" stroke-width="1.700" stroke-linejoin="round">
<path d="M1589 227L1521 261V300L1446 332 1273 414 1272 437 1200 475 1201 485H1147L949 580 890 611 767 671 715 692 621 743 612 742 555 769"/>
<path d="M1448 261L1446 332"/>
<path d="M751 367L809 398H820L849 414 848 439 947 484 949 580"/>
<path d="M355 533V547L381 557 380 630 402 640V655L503 700 502 726 528 737V747L553 760 555 769V912L485 942"/>
</g>
<path d="M1399 487v17l4-4 3 6 2-1-2-6h5z" fill="#fff" stroke="#222" stroke-width="1.200"/>
</svg>
</section>
</div>

<footer class="status">
<label class="locate"><svg><use href="#search"/></svg><input type="text" placeholder="Type to locate (Ctrl+K)" aria-label="Type to locate"></label>
<span class="msg">1 legend entries removed.</span>
<label for="coord">Coordinate</label><input id="coord" class="field coord" value="439133.8,4457087.4">
<svg class="bug"><use href="#bug"/></svg>
<label for="scale">Scale</label><span class="combo"><input id="scale" value="1:825"><button aria-label="Scale list"><i class="tri"></i></button></span>
<svg class="lock"><use href="#lock"/></svg>
<label for="mag">Magnifier</label><span class="combo spin"><input id="mag" value="100%"><span class="steps"><button aria-label="More"><i class="tri upw"></i></button><button aria-label="Less"><i class="tri"></i></button></span></span>
<label for="rot" class="rot">Rotation</label><span class="combo spin"><input id="rot" value="0.0 °"><span class="steps"><button aria-label="Clockwise"><i class="tri upw"></i></button><button aria-label="Counterclockwise"><i class="tri"></i></button></span></span>
<label class="render"><input type="checkbox" checked>Render</label>
<button class="crs"><svg><use href="#globe"/></svg>EPSG:32612</button>
<button class="crs" aria-label="Messages"><svg><use href="#chat"/></svg></button>
</footer>
</main>

<section class="dialog" aria-label="Attribute table">
<div class="dlg-title"><i class="dot"></i><h2>river :: Features Total: 7, Filtered: 7, Selected: 0</h2>
<div class="winbtns"><button aria-label="Minimize"><svg><use href="#down"/></svg></button><button aria-label="Maximize"><svg><use href="#up"/></svg></button><button aria-label="Close"><svg><use href="#close"/></svg></button></div></div>
<div class="dlg-body">
<div class="dlg-tools">
<button aria-label="Edit"><svg><use href="#pencil"/></svg></button>
<button disabled aria-label="Multi edit"><svg><use href="#multi"/></svg></button>
<button disabled aria-label="Save"><svg><use href="#saveedit"/></svg></button>
<button aria-label="Reload"><svg><use href="#refresh"/></svg></button>
<i class="sep"></i>
<button disabled aria-label="Add feature"><svg><use href="#addrow"/></svg></button>
<button disabled aria-label="Delete"><svg><use href="#trash"/></svg></button>
<button disabled aria-label="Cut"><svg><use href="#cut"/></svg></button>
<button disabled aria-label="Copy"><svg><use href="#copy"/></svg></button>
<button disabled aria-label="Paste"><svg><use href="#paste"/></svg></button>
<i class="sep"></i>
<button aria-label="Select by expression"><svg><use href="#selexp"/></svg></button>
<button aria-label="Select all"><svg><use href="#selall"/></svg></button>
<button aria-label="Invert"><svg><use href="#invert"/></svg></button>
<button aria-label="Deselect"><svg><use href="#desel"/></svg></button>
<button aria-label="Filter"><svg><use href="#funnel"/></svg></button>
<button aria-label="Move to top"><svg><use href="#totop"/></svg></button>
<button aria-label="Pan to rows"><svg><use href="#pansel"/></svg></button>
<button class="more">»</button>
</div>
<div class="grid">
<table>
<thead><tr><th></th><th>id</th><th>ORDER</th></tr></thead>
<tbody>
<tr><th>1</th><td>0</td><td>1</td></tr>
<tr><th>2</th><td>1</td><td>1</td></tr>
<tr><th>3</th><td>2</td><td>1</td></tr>
<tr><th>4</th><td>3</td><td>1</td></tr>
<tr><th>5</th><td>4</td><td>2</td></tr>
<tr><th>6</th><td>6</td><td>2</td></tr>
<tr><th>7</th><td>7</td><td>2</td></tr>
</tbody>
</table>
</div>
<div class="dlg-foot">
<button class="show"><svg><use href="#funnel"/></svg>Show All Features<i class="tri"></i></button>
<button class="view" aria-label="Form view"><svg><use href="#form"/></svg></button>
<button class="view on" aria-label="Table view"><svg><use href="#table"/></svg></button>
</div>
</div>
</section>
</div>
</body>
</html>
```

FILE: styles.css
```css
* { box-sizing: border-box; }
body {
  margin: 0;
  font: 14px/20px "Noto Sans", sans-serif;
  color: #1a1a1a;
  background: #efeff0;
}
button, input { font: inherit; color: inherit; margin: 0; }
button { padding: 0; border: 0; background: none; display: inline-flex; align-items: center; justify-content: center; }
h1, h2 { margin: 0; font-size: inherit; font-weight: inherit; }
.sprite { display: block; width: 0; height: 0; }
.desktop { position: relative; display: flex; flex-direction: column; height: 100vh; overflow: hidden; }

/* desktop panel */
.panel { display: flex; align-items: center; flex: none; height: 26px; padding: 0 5px 0 12px; gap: 10px; background: #d3d5d2; border-bottom: 2px solid #7d7d7d; color: #333; }
.launch { width: 24px; }
.launch svg { width: 23px; height: 23px; }
.tray { display: flex; align-items: center; gap: 8px; margin-left: auto; }
.tray svg { width: 20px; height: 20px; }
.tray-grip { width: 3px; height: 15px; background: repeating-linear-gradient(#b4b5b3 0 3px, transparent 3px 6px); }
.kbd { color: #454d8c; font-weight: 600; }

.app { flex: 1; min-height: 0; display: flex; flex-direction: column; }
.titlebar { display: flex; align-items: center; flex: none; height: 30px; padding: 0 11px 4px 14px; background: linear-gradient(#d6d6d6, #c4c3c4); color: #767676; }
.titlebar h1 { flex: 1; text-align: center; font-weight: 500; padding: 4px 0 0 16px; }
.dot { flex: none; width: 7px; height: 7px; border-radius: 50%; background: #fff; box-shadow: 0 0 2px #999; }
.winbtns { display: flex; gap: 12px; }
.winbtns button { width: 17px; height: 17px; border-radius: 50%; border: 1px solid #aaa; background: #e9e9e9; }
.winbtns svg { width: 13px; height: 13px; flex: none; }

.menu { display: flex; flex: none; gap: 16px; height: 24px; padding: 1px 12px; border-bottom: 1px solid #d2d2d2; }
.menu a { color: inherit; text-decoration: none; }
.menu u { text-underline-offset: 3px; }

/* toolbars */
.toolbar { display: flex; align-items: center; flex: none; height: 39px; border-bottom: 1px solid #b4b4b4; background: linear-gradient(#fbfbfb, #efefef); }
.toolbar button { flex: none; width: 33px; height: 31px; }
.toolbar svg { width: 24px; height: 24px; flex: none; overflow: visible; }
.toolbar .on { background: #dcdade; border: 1px solid #a9a9a9; border-radius: 3px; }
button:disabled svg { filter: grayscale(1); opacity: .35; }
.grip { flex: none; width: 16px; display: flex; justify-content: center; }
.grip::before { content: ""; width: 5px; height: 17px; border: dotted #c4c4c4; border-width: 0 1px; }
.grip:first-child { width: 12px; padding-left: 2px; }
.grip.spaced { margin-left: 7px; }
.toolbar.plugins { height: 38px; }
.toolbar .drop { width: 45px; gap: 6px; padding-left: 4px; justify-content: flex-start; }
.drop::after, .tri { content: ""; flex: none; border: solid transparent; border-width: 4px 4px 0; border-top-color: #555; }
.drop:disabled::after { border-top-color: #bbb; }
.upw { transform: rotate(180deg); }
.sep { flex: none; width: 6px; height: 20px; background: linear-gradient(90deg, transparent 2px, #ccc 2px 3px, transparent 3px); }
.toolbar .more, .more { width: 30px; padding-left: 14px; font-size: 15px; font-weight: 600; }

/* work area */
.work { flex: 1; min-height: 0; display: flex; }
.dock { flex: none; width: 348px; margin-right: 6px; display: flex; flex-direction: column; }
.dock-head { display: flex; align-items: center; gap: 3px; flex: none; height: 23px; padding: 0 2px 0 4px; }
.dock-head h2 { flex: 1; }
.dock-head svg { width: 11px; height: 11px; }
.dock-tools { display: flex; align-items: center; flex: none; height: 29px; padding: 0 0 2px 3px; }
.dock-tools button { width: 25px; height: 24px; }
.dock-tools .drop { width: 38px; gap: 6px; }
.dock-tools svg { width: 15px; height: 15px; }
.tree { flex: 1; display: flex; justify-content: space-between; align-items: flex-start; background: #fff; border: 1px solid #aaa; }
.layer { display: flex; align-items: center; gap: 6px; padding: 1px 0 0 23px; }
.layer b { font-weight: 700; text-decoration: underline; text-underline-offset: 3px; }
.line { width: 16px; height: 2px; background: #4455bb; }
.scroll { width: 4px; height: 17px; margin-top: 2px; background: #e6e6e6; }
input[type=checkbox] { appearance: none; width: 14px; height: 14px; border: 1px solid #aaa; background: #fff; display: grid; place-items: center; }
input[type=checkbox]:checked::before { content: ""; width: 4px; height: 8px; border: solid #000; border-width: 0 2px 2px 0; transform: rotate(40deg); }
.tabs { display: flex; align-items: flex-start; flex: none; height: 30px; margin-top: 1px; border-top: 1px solid #aaa; font-size: 15px; }
.tabs button { height: 26px; padding: 0 11px; background: #dcdcdc; border: 1px solid #b6b6b6; border-width: 0 1px 1px 0; border-radius: 0 0 3px 3px; }
.tabs .current { height: 28px; padding: 0 12px; background: #f8f8f8; border-left-width: 1px; font-size: 14px; }
.canvas { flex: 1; min-width: 0; margin-top: 1px; background: #fff; border: 1px solid #a8a8a8; border-right-color: #ccc; }
.map { display: block; width: 100%; height: 100%; }

/* status bar */
.status { display: flex; align-items: center; flex: none; height: 32px; padding: 2px 7px 0 4px; font-size: 11px; gap: 5px; }
.locate { display: flex; align-items: center; gap: 7px; width: 266px; height: 27px; padding: 0 8px; background: #fff; border: 1px solid #aaa; border-radius: 3px; font-size: 15px; }
.locate svg { width: 13px; height: 13px; }
.locate input { flex: 1; min-width: 0; border: 0; padding: 0; outline: 0; background: none; }
.locate input::placeholder { color: #888; opacity: 1; }
.msg { flex: 1; padding-left: 3px; }
.field { height: 23px; border: 1px solid #aaa; border-radius: 3px; background: #fff; padding: 0 8px; font-size: 12px; }
.coord { width: 131px; }
.bug { width: 16px; height: 16px; margin-right: 9px; }
.combo { display: flex; width: 102px; height: 26px; border: 1px solid #aaa; border-radius: 3px; background: #fff; overflow: hidden; font-size: 12px; }
.combo input { flex: 1; min-width: 0; border: 0; padding: 0 3px; background: none; }
.combo > button { width: 20px; border-left: 1px solid #bbb; background: #f6f6f6; }
.spin { width: 97px; }
.steps { display: flex; flex-direction: column; width: 14px; border-left: 1px solid #bbb; background: #f6f6f6; }
.steps button { flex: 1; }
.lock { width: 14px; height: 15px; margin: 0 4px 0 7px; }
.rot { padding: 0 4px 0 5px; }
.render { display: flex; align-items: center; gap: 5px; padding: 0 10px 0 2px; }
.crs { gap: 5px; padding-left: 4px; font-size: 12px; }
.crs svg { width: 16px; height: 16px; }
.crs + .crs { padding-left: 13px; }

/* attribute table window */
.dialog { position: absolute; left: 1087px; top: 571px; width: 457px; display: flex; flex-direction: column; padding: 0 5px 5px; background: #d2d2d2; border: 1px solid #666; border-radius: 6px 6px 0 0; box-shadow: 3px 5px 14px 3px rgba(0, 0, 0, .5); }
.dlg-title { display: flex; align-items: center; gap: 11px; height: 30px; padding: 0 5px 3px 6px; color: #444; }
.dlg-title h2 { flex: 1; padding-top: 5px; text-align: right; font-weight: 600; white-space: nowrap; }
.dlg-title .winbtns { gap: 11px; }
.dlg-body { background: #efeff0; }
.dlg-tools { display: flex; align-items: center; height: 31px; padding: 0 0 1px 3px; }
.dlg-tools button { width: 25px; height: 24px; flex: none; }
.dlg-tools svg { width: 15px; height: 15px; flex: none; }
.dlg-tools .sep { width: 7px; height: 14px; }
.dlg-tools .more { width: 18px; margin-left: auto; padding: 0; }
.grid { height: 267px; background: linear-gradient(#efeff0 0 23px, transparent 23px), linear-gradient(90deg, #efeff0 0 15px, #fff 15px); border: 1px solid #b4b4b4; }
table { border-collapse: separate; border-spacing: 0; table-layout: fixed; width: 215px; font-size: 15px; }
th, td { height: 30px; padding: 0 2px 2px; border: solid #b8b8b8; border-width: 0 1px 1px 0; font-weight: 400; text-align: right; }
th { background: linear-gradient(#fdfdfd, #ececec); padding: 0; text-align: center; border-color: #aaa; }
tbody th { background: linear-gradient(90deg, #fdfdfd, #ececf0); padding-right: 2px; }
thead th { height: 23px; }
thead th:first-child { width: 15px; border-right: 0; }
thead th:last-child { border-right: 0; }
tbody tr { background: #fff; }
tbody tr:nth-child(even) { background: #f5f5f5; }
.dlg-foot { display: flex; align-items: center; gap: 2px; height: 32px; padding: 0 3px; }
.show { height: 26px; margin-right: auto; padding: 0 2px 0 5px; gap: 6px; border: 1px solid #aaa; border-radius: 3px; background: linear-gradient(#fff, #f4f4f4); }
.show .tri { align-self: flex-end; margin: 0 0 4px -3px; border-width: 3px 3px 0; }
.dlg-foot svg { width: 15px; height: 15px; }
.view { width: 24px; height: 23px; border: 1px solid transparent; border-radius: 2px; }
.view.on { background: #dcdade; border-color: #a9a9a9; }
```
